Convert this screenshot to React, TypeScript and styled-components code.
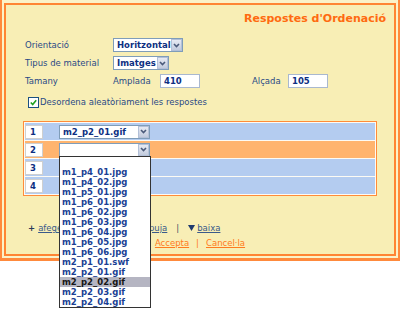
import styled, { createGlobalStyle } from 'styled-components';

const GlobalStyle = createGlobalStyle`
  html, body {
    margin: 0;
    min-height: 318px;
    background: #fff;
    font-family: "DejaVu Sans", Verdana, sans-serif;
  }
  #root {
    min-height: 318px;
  }
`;

const Frame = styled.div`
  width: 400px;
  height: 261px;
  box-sizing: border-box;
  border: 2px solid #ff8a3c;
  border-top: none;
  border-bottom-width: 3px;
  padding: 3px 2px 2px;
  background: #fbf2c8;
`;

const Panel = styled.div`
  height: 100%;
  box-sizing: border-box;
  border: 2px solid #ff8533;
  background: #f8eeb5;
  display: flex;
  flex-direction: column;
`;

const Title = styled.h1`
  margin: 7px 8px 0 0;
  text-align: right;
  font-size: 11px;
  line-height: 14px;
  font-weight: bold;
  color: #ff6a10;
`;

const Form = styled.div`
  margin: 12px 0 0 19px;
  display: flex;
  flex-direction: column;
  gap: 4px;
`;

const FieldRow = styled.div`
  display: flex;
  align-items: center;
  height: 14px;
`;

const Label = styled.span<{ $w: number; $ml?: number }>`
  width: ${p => p.$w}px;
  margin-left: ${p => p.$ml ?? 0}px;
  flex-shrink: 0;
  color: #2a4a85;
  font-size: 8.5px;
  line-height: 14px;
  white-space: nowrap;
`;

const SelectBox = styled.div<{ $w: number }>`
  width: ${p => p.$w}px;
  height: 14px;
  box-sizing: border-box;
  border: 1px solid #7f9db9;
  background: #fff;
  display: flex;
  align-items: center;
  position: relative;
  flex-shrink: 0;
`;

const SelectText = styled.span`
  flex: 1;
  padding-left: 3px;
  font-size: 8.5px;
  font-weight: bold;
  color: #0d2f82;
  white-space: nowrap;
  overflow: hidden;
`;

const ArrowButton = styled.span`
  width: 11px;
  height: 12px;
  box-sizing: border-box;
  border: 1px solid #b3c0d8;
  background: linear-gradient(#e6eaf3, #c2cbdd);
  display: flex;
  align-items: center;
  justify-content: center;
`;

const TextInput = styled.div<{ $w: number }>`
  width: ${p => p.$w}px;
  height: 14px;
  box-sizing: border-box;
  border: 1px solid #a9b8cf;
  background: #fff;
  padding-left: 3px;
  font-size: 8.5px;
  line-height: 12px;
  font-weight: bold;
  color: #0d2f82;
  flex-shrink: 0;
`;

const CheckRow = styled.label`
  margin: 4px 0 0 3px;
  display: flex;
  align-items: center;
  gap: 1px;
  height: 12px;
  color: #2a4a85;
  font-size: 8.5px;
`;

const CheckBox = styled.span`
  width: 11px;
  height: 11px;
  box-sizing: border-box;
  border: 1px solid #1c5180;
  background: #fff;
  display: flex;
  align-items: center;
  justify-content: center;
`;

const RowList = styled.div`
  margin: 13px 0 0 17px;
  width: 354px;
  box-sizing: border-box;
  border: 1px solid #ff8c3a;
  padding: 1px;
  background: #fdfbf4;
  display: flex;
  flex-direction: column;
  gap: 1px;
`;

const Row = styled.div<{ $active?: boolean }>`
  height: 17px;
  background: ${p => (p.$active ? '#ffb46e' : '#b4ccf0')};
  display: flex;
  align-items: center;
  gap: 16px;
`;

const NumberBox = styled.div`
  width: 18px;
  height: 14px;
  box-sizing: border-box;
  border: 1px solid #cfcfcf;
  background: #fff;
  padding-left: 4px;
  font-size: 8.5px;
  line-height: 12px;
  font-weight: bold;
  color: #0d2f82;
`;

const Dropdown = styled.ul`
  position: absolute;
  top: 100%;
  left: -1px;
  width: 92px;
  margin: 0;
  padding: 0;
  list-style: none;
  box-sizing: border-box;
  border: 1px solid #333;
  background: #fff;
  z-index: 10;
`;

const Option = styled.li<{ $selected?: boolean }>`
  height: 10px;
  padding-left: 2px;
  font-size: 8.5px;
  line-height: 10px;
  font-weight: bold;
  white-space: nowrap;
  color: ${p => (p.$selected ? '#151515' : '#1a3f94')};
  background: ${p => (p.$selected ? '#b5b5c2' : 'transparent')};
`;

const LinkBar = styled.div`
  margin: 26px 0 0 22px;
  height: 12px;
  display: flex;
  align-items: center;
  font-size: 8.5px;
  color: #3a4a66;
`;

const Plus = styled.span`
  margin-right: 3px;
  font-weight: bold;
  color: #2a3a5a;
`;

const Link = styled.span<{ $accent?: boolean }>`
  text-decoration: underline;
  color: ${p => (p.$accent ? '#ff7a20' : '#3a5a8a')};
`;

const Sep = styled.span<{ $accent?: boolean }>`
  margin: 0 ${p => (p.$accent ? 7 : 9)}px;
  color: ${p => (p.$accent ? '#ff7a20' : '#3a4a66')};
`;

const Arrow = styled.span`
  display: flex;
  margin-right: 2px;
`;

const Actions = styled.div`
  margin-top: 3px;
  height: 12px;
  display: flex;
  justify-content: center;
  align-items: center;
  font-size: 8.5px;
`;

function Chevron() {
  return (
    <svg width="7" height="5" viewBox="0 0 7 5">
      <polyline points="1,1 3.5,3.5 6,1" fill="none" stroke="#4a5a7a" strokeWidth="1.6" />
    </svg>
  );
}

function Triangle({ up }: { up?: boolean }) {
  return (
    <Arrow>
      <svg width="7" height="6" viewBox="0 0 7 6">
        <polygon points={up ? '0,6 7,6 3.5,0' : '0,0 7,0 3.5,6'} fill="#1f3a6e" />
      </svg>
    </Arrow>
  );
}

function Select({ width, value, children }: { width: number; value: string; children?: React.ReactNode }) {
  return (
    <SelectBox $w={width}>
      <SelectText>{value}</SelectText>
      <ArrowButton>
        <Chevron />
      </ArrowButton>
      {children}
    </SelectBox>
  );
}

const files = [
  '',
  'm1_p4_01.jpg',
  'm1_p4_02.jpg',
  'm1_p5_01.jpg',
  'm1_p6_01.jpg',
  'm1_p6_02.jpg',
  'm1_p6_03.jpg',
  'm1_p6_04.jpg',
  'm1_p6_05.jpg',
  'm1_p6_06.jpg',
  'm2_p1_01.swf',
  'm2_p2_01.gif',
  'm2_p2_02.gif',
  'm2_p2_03.gif',
  'm2_p2_04.gif',
];

export default function App() {
  return (
    <>
      <GlobalStyle />
      <Frame>
        <Panel>
          <Title>Respostes d'Ordenació</Title>
          <Form>
            <FieldRow>
              <Label $w={88}>Orientació</Label>
              <Select width={70} value="Horitzontal" />
            </FieldRow>
            <FieldRow>
              <Label $w={88}>Tipus de material</Label>
              <Select width={56} value="Imatges" />
            </FieldRow>
            <FieldRow>
              <Label $w={88}>Tamany</Label>
              <Label $w={47}>Amplada</Label>
              <TextInput $w={40}>410</TextInput>
              <Label $w={36} $ml={52}>Alçada</Label>
              <TextInput $w={40}>105</TextInput>
            </FieldRow>
            <CheckRow>
              <CheckBox>
                <svg width="7" height="7" viewBox="0 0 7 7">
                  <polyline points="0.8,3.5 2.7,5.5 6.2,1.2" fill="none" stroke="#21a121" strokeWidth="1.6" />
                </svg>
              </CheckBox>
              Desordena aleatòriament les respostes
            </CheckRow>
          </Form>

          <RowList>
            <Row>
              <NumberBox>1</NumberBox>
              <Select width={91} value="m2_p2_01.gif" />
            </Row>
            <Row $active>
              <NumberBox>2</NumberBox>
              <Select width={91} value="">
                <Dropdown>
                  {files.map(f => (
                    <Option key={f || 'blank'} $selected={f === 'm2_p2_02.gif'}>
                      {f || '\u00a0'}
                    </Option>
                  ))}
                </Dropdown>
              </Select>
            </Row>
            <Row>
              <NumberBox>3</NumberBox>
            </Row>
            <Row>
              <NumberBox>4</NumberBox>
            </Row>
          </RowList>

          <LinkBar>
            <Plus>+</Plus>
            <Link>afegeix la resposta</Link>
            <Sep>|</Sep>
            <Triangle up />
            <Link>puja</Link>
            <Sep>|</Sep>
            <Triangle />
            <Link>baixa</Link>
          </LinkBar>

          <Actions>
            <Link $accent>Accepta</Link>
            <Sep $accent>|</Sep>
            <Link $accent>Cancel·la</Link>
          </Actions>
        </Panel>
      </Frame>
    </>
  );
}
